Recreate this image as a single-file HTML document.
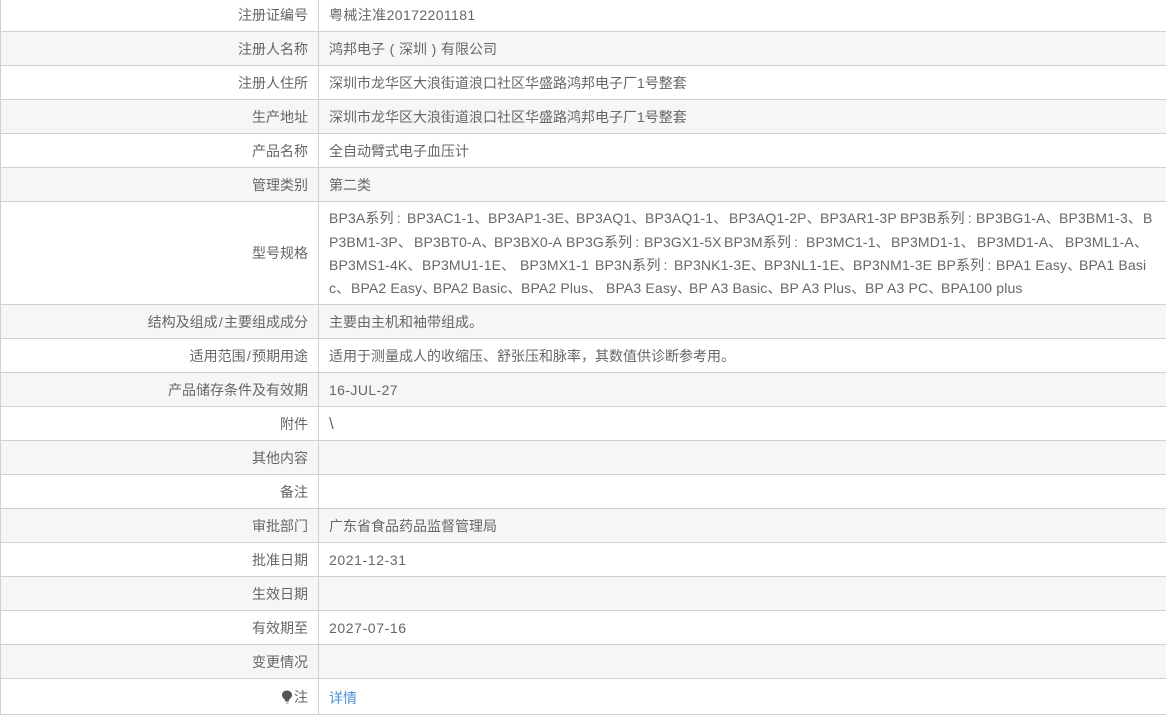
<!DOCTYPE html>
<html><head><meta charset="utf-8">
<style>
html,body{margin:0;padding:0;width:1166px;height:718px;overflow:hidden;background:#fff}
body{position:relative;font-family:"Liberation Sans","Noto Sans CJK SC",sans-serif;font-size:14px;color:#666}
.r{position:absolute;left:0;width:1166px;border-bottom:1px solid #d0d0d0;box-sizing:border-box}
.g{background:#f6f6f6}
.l{position:absolute;left:0;width:308px;text-align:right;top:0;white-space:nowrap}
.v{position:absolute;left:329px;top:0;white-space:nowrap;letter-spacing:.4px}
#bl{position:absolute;left:0;top:0;width:1px;height:715px;background:#d0d0d0}
#br{position:absolute;left:318px;top:0;width:1px;height:715px;background:#d0d0d0}
.a{position:absolute;white-space:nowrap;letter-spacing:.15px;line-height:23px}
.a1{top:5px}.a2{top:29px}.a3{top:52px}.a4{top:75px}
.c{display:inline-block;width:10px;text-align:center;letter-spacing:0}
.p{display:inline-block;width:14px;text-align:center;letter-spacing:0}
.s{padding:0 1.25px}
</style></head><body>
<div class="r" style="top:0;height:32px"><div class="l" style="line-height:30px">注册证编号</div><div class="v" style="line-height:30px">粤械注准20172201181</div></div>
<div class="r g" style="top:32px;height:34px"><div class="l" style="line-height:34px">注册人名称</div><div class="v" style="line-height:34px;letter-spacing:0">鸿邦电子<span class="p">(</span>深圳<span class="p">)</span>有限公司</div></div>
<div class="r" style="top:66px;height:34px"><div class="l" style="line-height:34px">注册人住所</div><div class="v" style="line-height:34px;letter-spacing:0">深圳市龙华区大浪街道浪口社区华盛路鸿邦电子厂1号整套</div></div>
<div class="r g" style="top:100px;height:34px"><div class="l" style="line-height:34px">生产地址</div><div class="v" style="line-height:34px;letter-spacing:0">深圳市龙华区大浪街道浪口社区华盛路鸿邦电子厂1号整套</div></div>
<div class="r" style="top:134px;height:34px"><div class="l" style="line-height:34px">产品名称</div><div class="v" style="line-height:34px;letter-spacing:0">全自动臂式电子血压计</div></div>
<div class="r g" style="top:168px;height:34px"><div class="l" style="line-height:34px">管理类别</div><div class="v" style="line-height:34px;letter-spacing:0">第二类</div></div>
<div class="r" style="top:202px;height:103px"><div class="l" style="line-height:102px">型号规格</div>
<span class="a a1" style="left:329px">BP3A系列<span class="c">:</span></span><span class="a a1" style="left:407px">BP3AC1-1、</span><span class="a a1" style="left:488px">BP3AP1-3E、</span><span class="a a1" style="left:576px">BP3AQ1、</span><span class="a a1" style="left:645px">BP3AQ1-1、</span><span class="a a1" style="left:729px">BP3AQ1-2P、</span><span class="a a1" style="left:820px">BP3AR1-3P</span><span class="a a1" style="left:900px">BP3B系列<span class="c">:</span></span><span class="a a1" style="left:976px">BP3BG1-A、</span><span class="a a1" style="left:1059px">BP3BM1-3、</span><span class="a a1" style="left:1143px">B</span>
<span class="a a2" style="left:329px">P3BM1-3P、</span><span class="a a2" style="left:414px">BP3BT0-A、</span><span class="a a2" style="left:494px">BP3BX0-A</span><span class="a a2" style="left:566px">BP3G系列<span class="c">:</span></span><span class="a a2" style="left:644px">BP3GX1-5X</span><span class="a a2" style="left:724px">BP3M系列<span class="c">:</span></span><span class="a a2" style="left:806px">BP3MC1-1、</span><span class="a a2" style="left:891px">BP3MD1-1、</span><span class="a a2" style="left:977px">BP3MD1-A、</span><span class="a a2" style="left:1065px">BP3ML1-A、</span>
<span class="a a3" style="left:329px">BP3MS1-4K、</span><span class="a a3" style="left:422px">BP3MU1-1E、</span><span class="a a3" style="left:520px">BP3MX1-1</span><span class="a a3" style="left:595px">BP3N系列<span class="c">:</span></span><span class="a a3" style="left:674px">BP3NK1-3E、</span><span class="a a3" style="left:764px">BP3NL1-1E、</span><span class="a a3" style="left:853px">BP3NM1-3E</span><span class="a a3" style="left:937px">BP系列<span class="c">:</span></span><span class="a a3" style="left:996px">BPA1 Easy、</span><span class="a a3" style="left:1079px">BPA1 Basi</span>
<span class="a a4" style="left:329px">c、</span><span class="a a4" style="left:351px">BPA2 Easy、</span><span class="a a4" style="left:433px">BPA2 Basic、</span><span class="a a4" style="left:521px">BPA2 Plus、</span><span class="a a4" style="left:606px">BPA3 Easy、</span><span class="a a4" style="left:689px">BP A3 Basic、</span><span class="a a4" style="left:780px">BP A3 Plus、</span><span class="a a4" style="left:865px">BP A3 PC、</span><span class="a a4" style="left:941px">BPA100 plus</span>
</div>
<div class="r g" style="top:305px;height:34px"><div class="l" style="line-height:34px">结构及组成<span class="s">/</span>主要组成成分</div><div class="v" style="line-height:34px;letter-spacing:0">主要由主机和袖带组成。</div></div>
<div class="r" style="top:339px;height:34px"><div class="l" style="line-height:34px">适用范围<span class="s">/</span>预期用途</div><div class="v" style="line-height:34px;letter-spacing:0">适用于测量成人的收缩压、舒张压和脉率，其数值供诊断参考用。</div></div>
<div class="r g" style="top:373px;height:34px"><div class="l" style="line-height:34px">产品储存条件及有效期</div><div class="v" style="line-height:34px">16-JUL-27</div></div>
<div class="r" style="top:407px;height:34px"><div class="l" style="line-height:34px">附件</div><div class="v" style="line-height:34px;font-size:17px">\</div></div>
<div class="r g" style="top:441px;height:34px"><div class="l" style="line-height:34px">其他内容</div></div>
<div class="r" style="top:475px;height:34px"><div class="l" style="line-height:34px">备注</div></div>
<div class="r g" style="top:509px;height:34px"><div class="l" style="line-height:34px">审批部门</div><div class="v" style="line-height:34px;letter-spacing:0">广东省食品药品监督管理局</div></div>
<div class="r" style="top:543px;height:34px"><div class="l" style="line-height:34px">批准日期</div><div class="v" style="line-height:34px;letter-spacing:.6px">2021-12-31</div></div>
<div class="r g" style="top:577px;height:34px"><div class="l" style="line-height:34px">生效日期</div></div>
<div class="r" style="top:611px;height:34px"><div class="l" style="line-height:34px">有效期至</div><div class="v" style="line-height:34px;letter-spacing:.6px">2027-07-16</div></div>
<div class="r g" style="top:645px;height:34px"><div class="l" style="line-height:34px">变更情况</div></div>
<div class="r" style="top:679px;height:36px"><div class="l" style="line-height:36px">注</div><svg style="position:absolute;left:281px;top:11px" width="13" height="14" viewBox="0 0 13 14"><path d="M6 .5C3 .5 1 2.600 1 5c0 2 1.300 3 2.500 4.200L4.500 11.500H7.500L8.500 9.200C9.800 8 11 7 11 5 11 2.600 9 .5 6 .5Z" fill="#555"/><path d="M5 12.500H7.500V13.500H5Z" fill="#888"/></svg><div class="v" style="line-height:38px;color:#4a90d9;letter-spacing:0">详情</div></div>
<div id="bl"></div><div id="br"></div>
</body></html>
